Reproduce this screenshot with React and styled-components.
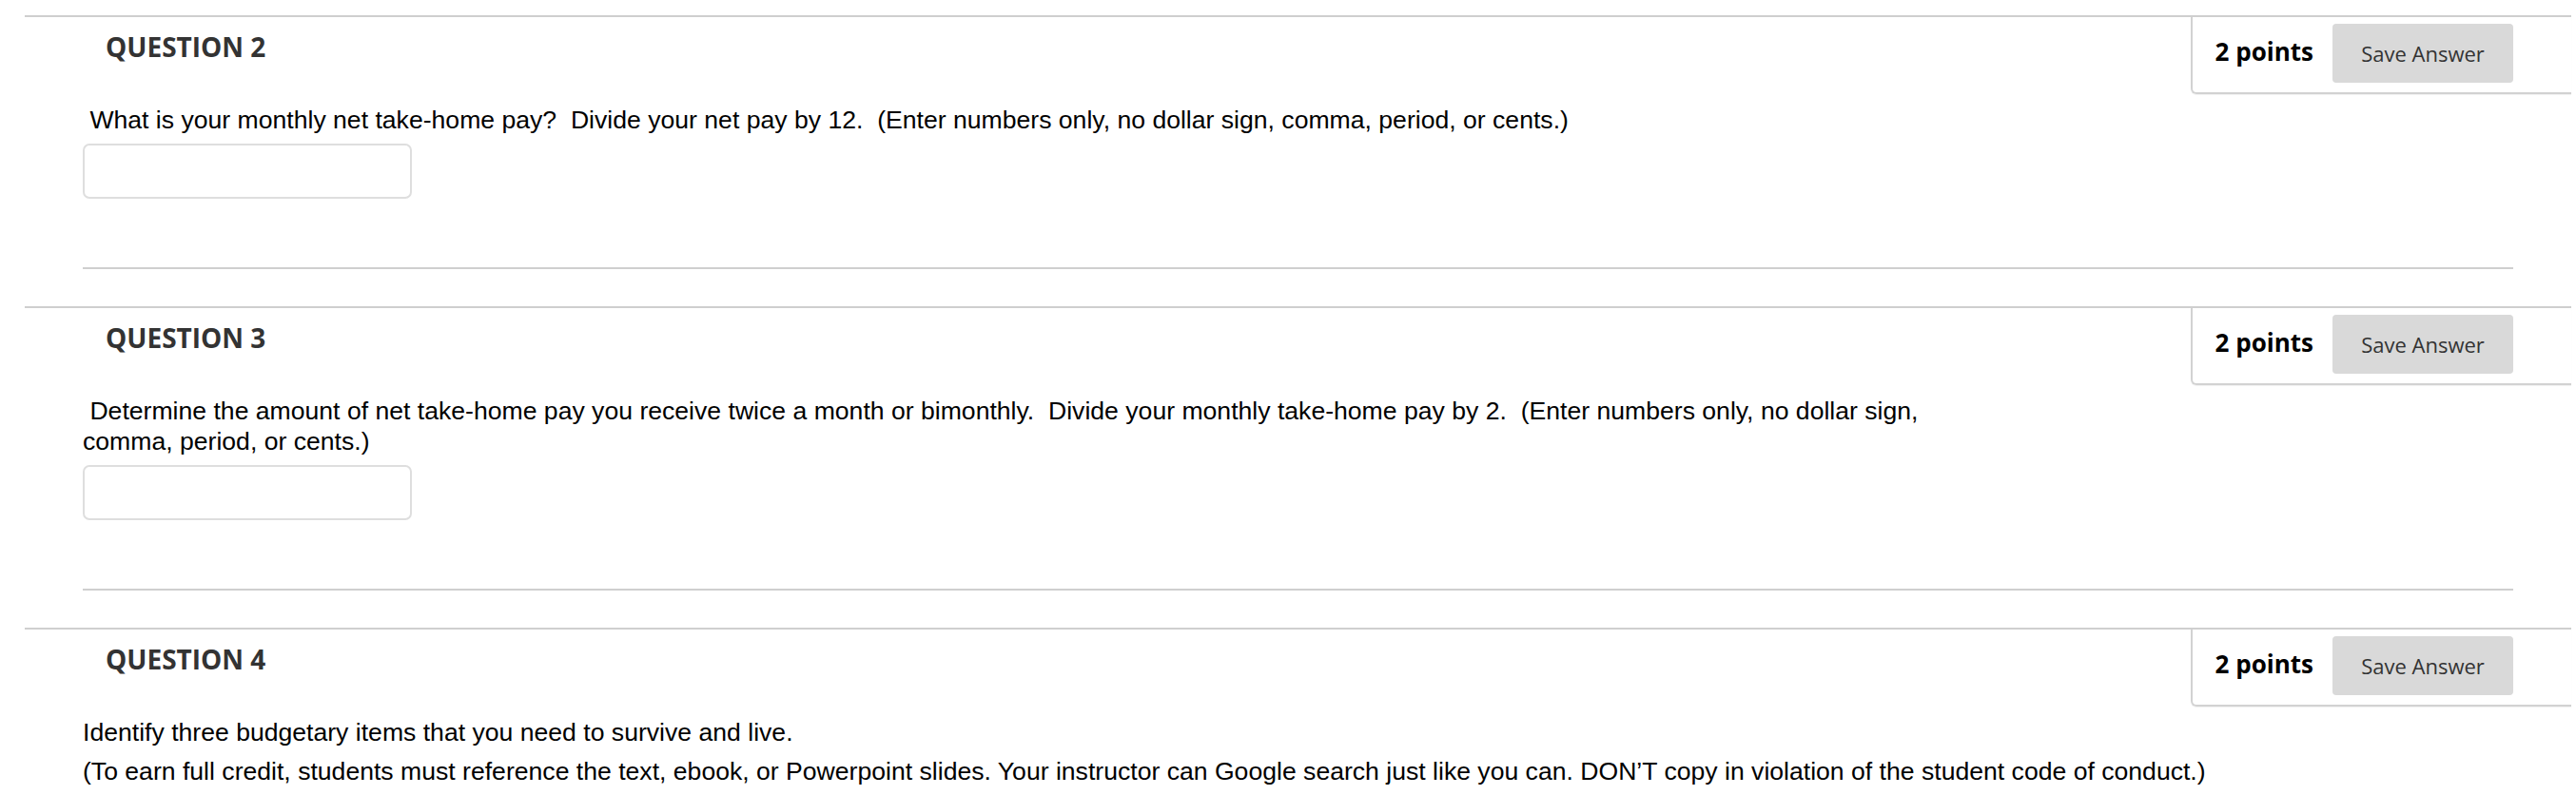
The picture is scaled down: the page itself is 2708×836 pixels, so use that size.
import React from "react";
import styled, { createGlobalStyle } from "styled-components";

const GlobalStyle = createGlobalStyle`
  html, body {
    margin: 0;
    padding: 0;
    background: #ffffff;
  }
  body {
    font-family: "Liberation Sans", Arial, sans-serif;
    color: #000;
  }
`;

const Page = styled.div`
  display: flex;
  flex-direction: column;
  padding-top: 16px;
`;

const Question = styled.section`
  margin: 0 5px 39px 26px;
  border-top: 2px solid #cfcfcf;
  display: flex;
  flex-direction: column;
`;

const Header = styled.div`
  display: flex;
  justify-content: space-between;
  align-items: flex-start;
`;

const Heading = styled.h3`
  margin: 12px 0 0 85px;
  font-family: "Open Sans", sans-serif;
  font-weight: 700;
  font-size: 28px;
  line-height: normal;
  color: #333333;
`;

const PointsBox = styled.div`
  display: flex;
  align-items: center;
  gap: 20px;
  padding: 7px 61px 10px 24px;
  border-left: 2px solid #d2d2d2;
  border-bottom: 2px solid #d2d2d2;
  border-bottom-left-radius: 6px;
  box-shadow: 0 1px 1px rgba(0, 0, 0, 0.06);
`;

const Points = styled.span`
  margin-bottom: 4px;
  font-family: "Open Sans", sans-serif;
  font-weight: 700;
  font-size: 26px;
  color: #000;
  white-space: nowrap;
`;

const SaveButton = styled.button`
  width: 190px;
  height: 62px;
  border: none;
  border-radius: 4px;
  background: #d9d9d9;
  font-family: "Open Sans", sans-serif;
  font-size: 22px;
  color: #333333;
  cursor: pointer;
  padding: 0;
`;

const Body = styled.div`
  display: flex;
  flex-direction: column;
  align-items: flex-start;
  padding: 11px 61px 0 61px;
`;

const Prompt = styled.p`
  margin: ${(p) => (p.$spaced ? "9px" : "0")} 0 0 0;
  font-family: "Liberation Sans", Arial, sans-serif;
  font-size: 26.6px;
  line-height: 32px;
  color: #000;
  white-space: pre-wrap;
`;

const AnswerInput = styled.input`
  margin-top: 9px;
  width: 346px;
  height: 58px;
  box-sizing: border-box;
  border: 2px solid #dedede;
  border-radius: 7px;
  background: #fff;
  font-size: 24px;
  padding: 0 10px;
  outline: none;
`;

const Separator = styled.hr`
  align-self: stretch;
  margin: 72px 0 0 0;
  border: none;
  border-top: 2px solid #cfcfcf;
  height: 0;
`;

const questions = [
  {
    id: 2,
    lines: [
      [" What is your monthly net take-home pay?  Divide your net pay by 12.  (Enter numbers only, no dollar sign, comma, period, or cents.)"],
    ],
    input: true,
  },
  {
    id: 3,
    lines: [
      [
        " Determine the amount of net take-home pay you receive twice a month or bimonthly.  Divide your monthly take-home pay by 2.  (Enter numbers only, no dollar sign,",
        "comma, period, or cents.)",
      ],
    ],
    input: true,
  },
  {
    id: 4,
    lines: [
      ["Identify three budgetary items that you need to survive and live."],
      [
        "(To earn full credit, students must reference the text, ebook, or Powerpoint slides. Your instructor can Google search just like you can. DON\u2019T copy in violation of the student code of conduct.)",
      ],
    ],
    input: false,
  },
];

export default function App() {
  return (
    <>
      <GlobalStyle />
      <Page>
        {questions.map((q) => (
          <Question key={q.id}>
            <Header>
              <Heading>QUESTION {q.id}</Heading>
              <PointsBox>
                <Points>2 points</Points>
                <SaveButton type="button">Save Answer</SaveButton>
              </PointsBox>
            </Header>
            <Body>
              {q.lines.map((para, i) => (
                <Prompt key={i} $spaced={i > 0}>
                  {para.map((line, j) => (
                    <React.Fragment key={j}>
                      {j > 0 && <br />}
                      {line}
                    </React.Fragment>
                  ))}
                </Prompt>
              ))}
              {q.input && <AnswerInput type="text" aria-label={`Answer to question ${q.id}`} />}
              {q.input && <Separator />}
            </Body>
          </Question>
        ))}
      </Page>
    </>
  );
}
